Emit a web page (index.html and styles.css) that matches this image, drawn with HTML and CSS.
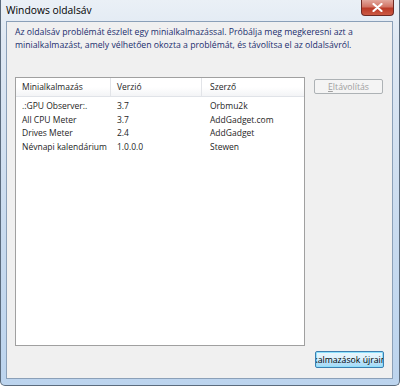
FILE: index.html
```html
<!DOCTYPE html>
<html>
<head>
    <meta charset="UTF-8">
    <title>Windows oldalsáv</title>
    <link rel="stylesheet" href="styles.css">
</head>
<body>
    <div class="window">
        <div class="titlebar">
            <span class="title">Windows oldalsáv</span>
            <div class="close">
                <svg width="13" height="9" viewBox="0 0 13 9">
                    <path d="M2.5 1 L10.5 8 M10.5 1 L2.5 8" stroke="#fff" stroke-width="2.2" stroke-linecap="round"/>
                </svg>
            </div>
        </div>
        <div class="client">
            <p class="message">Az oldalsáv problémát észlelt egy minialkalmazással. Próbálja meg megkeresni azt a minialkalmazást, amely vélhetően okozta a problémát, és távolítsa el az oldalsávról.</p>
            <div class="main">
                <div class="listview">
                    <div class="row header">
                        <span class="col c1">Minialkalmazás</span>
                        <span class="col c2">Verzió</span>
                        <span class="col c3">Szerző</span>
                    </div>
                    <div class="rows">
                        <div class="row">
                            <span class="col c1">.:GPU Observer:.</span>
                            <span class="col c2">3.7</span>
                            <span class="col c3">Orbmu2k</span>
                        </div>
                        <div class="row">
                            <span class="col c1">All CPU Meter</span>
                            <span class="col c2">3.7</span>
                            <span class="col c3">AddGadget.com</span>
                        </div>
                        <div class="row">
                            <span class="col c1">Drives Meter</span>
                            <span class="col c2">2.4</span>
                            <span class="col c3">AddGadget</span>
                        </div>
                        <div class="row">
                            <span class="col c1">Névnapi kalendárium</span>
                            <span class="col c2">1.0.0.0</span>
                            <span class="col c3">Stewen</span>
                        </div>
                    </div>
                </div>
                <div class="side">
                    <button class="btn" disabled><u>E</u>ltávolítás</button>
                </div>
            </div>
            <div class="footer">
                <button class="btn focus"><span>Minialkalmazások újraindítása</span></button>
            </div>
        </div>
    </div>
</body>
</html>
```

FILE: styles.css
```css
html, body {
    margin: 0;
    padding: 0;
}
body {
    width: 400px;
    height: 386px;
    overflow: hidden;
    font-family: "Open Sans", "DejaVu Sans", sans-serif;
    font-size: 8.5px;
    color: #1e1e1e;
}
.window {
    box-sizing: border-box;
    width: 400px;
    height: 386px;
    display: flex;
    flex-direction: column;
    background: linear-gradient(to bottom, #eaf0f6 0px, #dfe8f3 40px, #c9dbef 60%, #bcd4ee 100%);
    border: 1px solid #5b6b7d;
    border-top: none;
    border-radius: 0 0 5px 5px;
}
.titlebar {
    height: 21px;
    display: flex;
    align-items: flex-start;
    justify-content: space-between;
    padding-left: 5px;
}
.title {
    font-family: "Open Sans", sans-serif;
    font-size: 10.3px;
    color: #000;
    margin-top: 3px;
}
.close {
    width: 33px;
    height: 16px;
    margin-right: 5px;
    border: 1px solid #6e2a24;
    border-top: none;
    border-radius: 0 0 4px 4px;
    background: linear-gradient(to bottom, #e3a89d 0%, #d27465 45%, #bb3a27 55%, #cc5a44 100%);
    display: flex;
    align-items: center;
    justify-content: center;
    box-sizing: border-box;
}
.client {
    flex: 1;
    margin: 0 6px 6px 5px;
    border: 1px solid #8ba0b8;
    background: #f0f0f0;
    padding: 4px 8px 10px 8px;
    display: flex;
    flex-direction: column;
}
.message {
    margin: 0;
    font-size: 8.7px;
    line-height: 13px;
    color: #1a2e6e;
}
.main {
    display: flex;
    gap: 9px;
    margin-top: 25px;
}
.listview {
    width: 290px;
    height: 269px;
    box-sizing: border-box;
    border: 1px solid #a0a0a0;
    background: #fff;
}
.row {
    display: flex;
    height: 13.5px;
    line-height: 13.5px;
}
.row.header {
    height: 18px;
    line-height: 18px;
    background: linear-gradient(to bottom, #ffffff 0%, #ffffff 50%, #f3f4f6 100%);
    border-bottom: 1px solid #e0e3e8;
    margin-bottom: 2px;
}
.col {
    box-sizing: border-box;
    padding-left: 6px;
    white-space: nowrap;
    overflow: hidden;
}
.c1 { width: 95px; }
.c2 { width: 91px; }
.c3 { width: 102px; padding-left: 8px; }
.header .c1, .header .c2 {
    border-right: 1px solid #e2e4e8;
}
.side {
    padding-top: 2px;
}
.btn {
    width: 69px;
    height: 15px;
    padding: 0;
    font-family: "Open Sans", sans-serif;
    font-size: 8.7px;
    border-radius: 2px;
    box-sizing: border-box;
    overflow: hidden;
    white-space: nowrap;
    display: flex;
    align-items: center;
    justify-content: center;
}
.btn[disabled] {
    background: #f4f4f4;
    border: 1px solid #adb2b5;
    color: #a0a0a0;
}
.footer {
    margin-top: auto;
    display: flex;
    justify-content: flex-end;
}
.btn.focus {
    height: 17px;
    border: 1px solid #3c7fb1;
    box-shadow: inset 0 0 0 1px #8ee0fb;
    background: linear-gradient(to bottom, #eaf6fd 0%, #d9f0fc 50%, #bee6fd 51%, #a7d9f5 100%);
    color: #000;
}
```
